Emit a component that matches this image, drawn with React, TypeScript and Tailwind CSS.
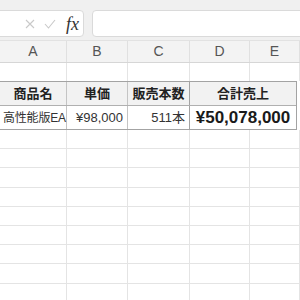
import React from 'react';

const cols = ['A', 'B', 'C', 'D', 'E'];
const colWidths = ['w-[67px]', 'w-[61px]', 'w-[62px]', 'w-[60px]', 'w-[50px]'];

const GridRow = ({ h }: { h: string }) => (
  <div className={`flex ${h} border-b border-[#e4e4e4]`}>
    {colWidths.map((w, i) => (
      <div key={i} className={`${w} shrink-0 border-r border-[#e4e4e4]`} />
    ))}
  </div>
);

const App = () => {
  return (
    <div
      className="w-[300px] h-[300px] overflow-hidden bg-white text-[#222]"
      style={{ fontFamily: '"Liberation Sans", "Noto Sans CJK JP", sans-serif' }}
    >
      {/* formula bar */}
      <div className="h-[41px] bg-[#f0f0f0] pt-[10px] flex border-b border-[#e2e2e2]">
        <div className="-ml-[10px] w-[94px] h-[27px] bg-white border border-[#dadada] rounded-[4px] flex items-center justify-end pr-[4px] gap-[9px] shrink-0">
          <svg width="10" height="10" viewBox="0 0 10 10">
            <path d="M1 1 L9 9 M9 1 L1 9" stroke="#c9c9c9" strokeWidth="1.1" fill="none" />
          </svg>
          <svg width="12" height="10" viewBox="0 0 12 10">
            <path d="M1 5 L4.5 9 L11 1" stroke="#c9c9c9" strokeWidth="1.1" fill="none" />
          </svg>
          <span
            className="italic text-[18px] text-[#333] leading-none ml-[1px]"
            style={{ fontFamily: '"Liberation Serif", serif' }}
          >
            fx
          </span>
        </div>
        <div className="ml-[8px] flex-1 -mr-[10px] h-[27px] bg-white border border-[#dadada] rounded-[4px]" />
      </div>

      {/* column headers */}
      <div className="flex h-[22px] bg-[#f3f3f3] border-b border-[#d6d6d6]">
        {cols.map((c, i) => (
          <div
            key={c}
            className={`${colWidths[i]} shrink-0 border-r border-[#e0e0e0] flex items-center justify-center text-[14px] text-[#555]`}
          >
            {c}
          </div>
        ))}
      </div>

      {/* row 1 empty */}
      <div className="flex h-[18px]">
        {colWidths.map((w, i) => (
          <div key={i} className={`${w} shrink-0 border-r border-[#e4e4e4]`} />
        ))}
      </div>

      {/* table */}
      <div className="flex">
        <div className="w-[297px] shrink-0 border-y border-r border-[#a3a3a3]">
          <div className="flex h-[24px] bg-[#f2f2f2] border-b border-[#b0b0b0] font-bold text-[13px]">
            <div className="w-[67px] shrink-0 border-r border-[#c4c4c4] flex items-center justify-center">商品名</div>
            <div className="w-[61px] shrink-0 border-r border-[#c4c4c4] flex items-center justify-center">単価</div>
            <div className="w-[62px] shrink-0 border-r border-[#a3a3a3] flex items-center justify-center">販売本数</div>
            <div className="flex-1 flex items-center justify-center">合計売上</div>
          </div>
          <div className="flex h-[23px] text-[13px] text-[#333]">
            <div className="w-[67px] shrink-0 border-r border-[#c4c4c4] flex items-center pl-[3px] whitespace-nowrap text-[12px] tracking-[-0.2px]">
              高性能版EA
            </div>
            <div className="w-[61px] shrink-0 border-r border-[#c4c4c4] flex items-center justify-end pr-[4px] text-[13px]">
              ¥98,000
            </div>
            <div className="w-[62px] shrink-0 border-r border-[#a3a3a3] flex items-center justify-end pr-[4px] text-[13px]">
              511本
            </div>
            <div className="flex-1 flex items-center justify-center font-bold text-[17px] text-[#1a1a1a]">¥50,078,000</div>
          </div>
        </div>
      </div>

      {/* empty grid rows */}
      {Array.from({ length: 9 }).map((_, i) => (
        <GridRow key={i} h="h-[19.2px]" />
      ))}
    </div>
  );
};

export default App;
